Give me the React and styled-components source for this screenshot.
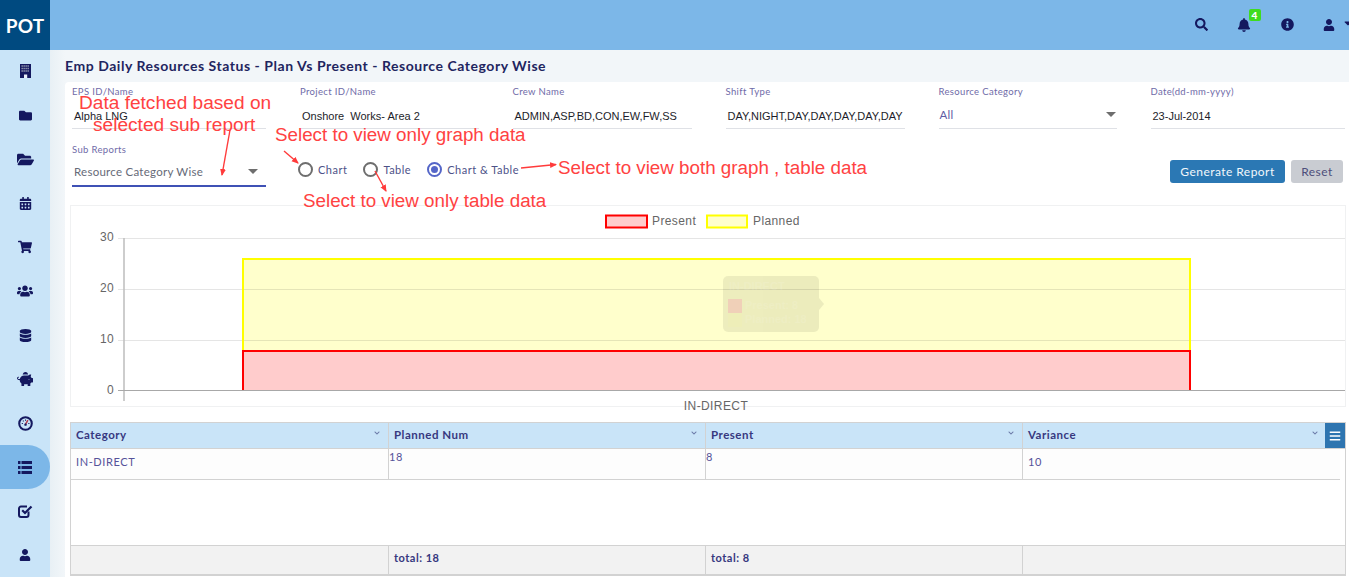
import React from "react";
import styled, { createGlobalStyle } from "styled-components";
import {
  FaFolder, FaFolderOpen, FaCalendarAlt, FaShoppingCart, FaUsers, FaDatabase,
  FaPiggyBank, FaUser, FaSearch, FaBell, FaInfoCircle, FaCaretDown, FaBars, FaChevronDown,
} from "react-icons/fa";

const Global = createGlobalStyle`
  html, body { margin: 0; padding: 0; background: #fff; }
  * { box-sizing: border-box; }
`;

const Page = styled.div`
  position: relative;
  width: 1349px;
  height: 577px;
  overflow: hidden;
  display: grid;
  grid-template-columns: 50px 1fr;
  grid-template-rows: 50px 1fr;
  font-family: "Lato", sans-serif;
  color: #3b3a8c;
`;
const Logo = styled.div`
  background: #004a80;
  color: #fff;
  font-size: 19px;
  font-weight: 700;
  display: flex;
  align-items: center;
  justify-content: center;
  letter-spacing: 0.2px;
`;
const TopBar = styled.header`
  background: #7cb7e8;
  display: flex;
  align-items: center;
  justify-content: flex-end;
  color: #14185f;
  overflow: hidden;
`;
const TopIcon = styled.span`
  position: relative;
  display: flex;
  align-items: center;
  width: 43px;
  flex: none;
  justify-content: center;
  font-size: ${(p) => p.$size || 13}px;
  margin-top: -1px;
`;
const UserMenu = styled(TopIcon)`
  width: 32px;
  justify-content: flex-start;
  gap: 7px;
  margin-left: 14.5px;
  margin-right: -6px;
`;
const Caret = styled(FaCaretDown)`
  font-size: 12px;
  flex: none;
  margin-top: -4px;
`;
const Badge = styled.span`
  position: absolute;
  top: -9px;
  left: 26px;
  min-width: 12px;
  height: 12px;
  border-radius: 2px;
  background: #3fdc1e;
  color: #fff;
  font-size: 10px;
  font-weight: 900;
  line-height: 12px;
  text-align: center;
`;
const Sidebar = styled.nav`
  background: #c9e4f8;
  display: flex;
  flex-direction: column;
`;
const NavItem = styled.div`
  height: 44px;
  flex: none;
  display: flex;
  align-items: center;
  justify-content: center;
  color: #14185f;
  font-size: 14px;
  position: relative;
  top: -1px;
  background: ${(p) => (p.$active ? "#7cb7e8" : "transparent")};
  border-radius: 0 22px 22px 0;
`;
const Main = styled.main`
  background: linear-gradient(90deg, #e8f0f5 0, #f2f6f9 15px);
  padding-left: 15px;
  display: flex;
  flex-direction: column;
  min-width: 0;
`;
const Title = styled.h1`
  margin: 0;
  height: 32px;
  font-size: 14px;
  line-height: 32px;
  font-weight: 700;
  color: #1f2560;
  letter-spacing: 0.54px;
  white-space: nowrap;
`;
const Panel = styled.section`
  flex: 1;
  background: #fff;
  border-radius: 4px 0 0 0;
  padding: 4px 3px 0 5px;
  display: flex;
  flex-direction: column;
`;
const FieldRow = styled.div`
  display: grid;
  grid-template-columns: 194px 178.5px 179px 179px 178px 194px;
  column-gap: 34px;
  padding-left: 2px;
  height: 43px;
`;
const Field = styled.div`
  display: flex;
  flex-direction: column;
  flex: 1;
  border-bottom: ${(p) => (p.$strong ? "2px solid #3f51b5" : "1px solid #dfe1e6")};
  min-width: 0;
`;
const Label = styled.label`
  font-size: 9.5px;
  line-height: 12px;
  color: #6f6ba8;
  letter-spacing: 0.35px;
  white-space: nowrap;
`;
const Value = styled.div`
  margin-top: 11px;
  padding-left: 2px;
  font-family: "Liberation Sans", sans-serif;
  font-size: 11px;
  line-height: 14px;
  color: #1d1d2a;
  white-space: pre;
`;
const SelectValue = styled.div`
  display: flex;
  align-items: center;
  justify-content: space-between;
  font-size: 11.5px;
  letter-spacing: ${(p) => (p.$wide ? "0.26px" : "0.3px")};
  color: ${(p) => (p.$wide ? "#666a78" : "#5f5ca3")};
  padding: 0 0 0 ${(p) => (p.$wide ? "2px" : "1px")};
  margin-top: ${(p) => (p.$wide ? "9px" : "10px")};
  line-height: 14px;
`;
const Arrow = styled.span`
  width: 0;
  height: 0;
  border-left: 5px solid transparent;
  border-right: 5px solid transparent;
  border-top: 5px solid #6e6e6e;
  margin-right: ${(p) => (p.$right || 1)}px;
  margin-top: -2px;
`;
const ControlRow = styled.div`
  display: flex;
  margin-top: 15px;
  height: 43px;
  padding: 0 3px 0 2px;
`;
const SubReports = styled.div`
  width: 194px;
  display: flex;
`;
const Radios = styled.div`
  display: flex;
  margin-left: 32px;
  gap: 16px;
  height: 15px;
  margin-top: 18px;
`;
const Radio = styled.div`
  display: flex;
  align-items: center;
  gap: 5px;
  font-size: 11px;
  letter-spacing: 0.5px;
  color: #4d5288;
  white-space: nowrap;
`;
const Dot = styled.span`
  width: 15px;
  height: 15px;
  flex: none;
  border-radius: 50%;
  border: 2px solid ${(p) => (p.$on ? "#5566c8" : "#6e6e6e")};
  display: flex;
  align-items: center;
  justify-content: center;
  &::after {
    content: "";
    width: 7px;
    height: 7px;
    border-radius: 50%;
    background: ${(p) => (p.$on ? "#5566c8" : "transparent")};
  }
`;
const Actions = styled.div`
  margin-left: auto;
  display: flex;
  gap: 6px;
  margin-top: 16px;
  height: 23px;
`;
const Button = styled.button`
  border: 0;
  border-radius: 3px;
  padding: 0;
  width: ${(p) => p.$w}px;
  font-family: "Lato", sans-serif;
  font-size: 12px;
  letter-spacing: 0.45px;
  background: ${(p) => (p.$primary ? "#2b78b4" : "#c9ccd2")};
  color: ${(p) => (p.$primary ? "#f2f7fb" : "#4d4f7a")};
`;
const ChartFrame = styled.div`
  margin-top: 18px;
  height: 202px;
  border: 1px solid #f0f1f2;
`;
const ChartSvg = styled.svg`
  display: block;
  width: 1274px;
  height: 200px;
  overflow: visible;
  font-family: "Liberation Sans", sans-serif;
`;
const Table = styled.div`
  position: relative;
  margin-top: 15px;
  height: 154px;
  border: 1px solid #d2d2d2;
  border-bottom-width: 2px;
  display: flex;
  flex-direction: column;
`;
const Cols = styled.div`
  display: grid;
  grid-template-columns: 318px 317px 317px 1fr;
`;
const Head = styled(Cols)`
  height: 26px;
  flex: none;
  background: #c9e4f8;
  border-bottom: 1px solid #d2d2d2;
`;
const HeadCell = styled.div`
  display: flex;
  align-items: center;
  justify-content: space-between;
  padding: 0 ${(p) => (p.$last ? "27px" : "8px")} 2px 5px;
  font-size: 11.5px;
  font-weight: 700;
  letter-spacing: 0.5px;
  color: #37387f;
  border-right: ${(p) => (p.$last ? "0" : "1px solid #d2d2d2")};
`;
const Chevron = styled(FaChevronDown)`
  font-size: 6px;
  color: #6b7aa8;
  margin-top: -4px;
`;
const MenuButton = styled.span`
  position: absolute;
  top: 0;
  right: 0;
  width: 20px;
  height: 25px;
  background: #2e75b0;
  color: #fff;
  display: flex;
  align-items: center;
  justify-content: center;
  font-size: 12px;
`;
const BodyRow = styled(Cols)`
  height: 31px;
  flex: none;
  margin-right: 5px;
  border-bottom: 1px solid #d2d2d2;
  background: #fdfdfd;
`;
const Cell = styled.div`
  padding: ${(p) => (p.$raw ? "1px 0 0 0" : "6px 0 0 5px")};
  font-size: 11px;
  line-height: 14px;
  letter-spacing: 0.6px;
  color: #55529a;
  border-right: ${(p) => (p.$last ? "0" : "1px solid #d2d2d2")};
`;
const Spacer = styled.div`
  flex: 1;
`;
const Foot = styled(Cols)`
  height: 29px;
  flex: none;
  background: #f2f2f2;
  border-top: 1px solid #d2d2d2;
`;
const FootCell = styled.div`
  padding: 5px 0 0 5px;
  font-size: 11px;
  line-height: 14px;
  font-weight: 700;
  letter-spacing: 0.5px;
  color: #37387f;
  border-right: ${(p) => (p.$last ? "0" : "1px solid #d2d2d2")};
`;
const Note = styled.div`
  position: absolute;
  left: ${(p) => p.$x}px;
  top: ${(p) => p.$y}px;
  font-family: "Liberation Sans", sans-serif;
  font-size: ${(p) => p.$size || 18.8}px;
  line-height: 22px;
  color: #ff4242;
  white-space: nowrap;
  z-index: 3;
`;
const ArrowLayer = styled.svg`
  position: absolute;
  left: 0;
  top: 0;
  width: 1349px;
  height: 577px;
  pointer-events: none;
  z-index: 4;
`;

const Building = () => (
  <svg width="11" height="14" viewBox="0 0 11 14">
    <rect width="11" height="14" fill="#14185f" />
    <path d="M1.5 2h8M1.5 4.5h8M1.5 7h8" stroke="#9fa5b8" strokeWidth="1.3" strokeDasharray="1.3 0.7" />
    <rect x="4" y="10.5" width="3.2" height="3.5" fill="#e8eef8" />
  </svg>
);
const Gauge = () => (
  <svg width="15" height="15" viewBox="0 0 16 16" fill="none" stroke="currentColor">
    <circle cx="8" cy="8" r="6.7" strokeWidth="2.2" />
    <path d="M8 9 10.5 4.5" strokeWidth="1.6" stroke="#b03a4a" />
    <path d="M4 8h1.2M11 8h1.2M5.2 5 6 5.8M8 3.6V5" strokeWidth="1.1" />
    <circle cx="8" cy="9.2" r="1.3" fill="currentColor" stroke="none" />
  </svg>
);
const ListIcon = () => (
  <svg width="14" height="13" viewBox="0 0 14 13" fill="currentColor">
    <path d="M0 0h2.5v3H0zM3.5 0H14v3H3.5zM0 5h2.5v3H0zM3.5 5H14v3H3.5zM0 10h2.5v3H0zM3.5 10H14v3H3.5z" />
  </svg>
);
const CheckBox = () => (
  <svg width="15" height="14" viewBox="0 0 15 14" fill="none" stroke="currentColor">
    <path d="M10.5 7.5V11a2 2 0 0 1-2 2H3a2 2 0 0 1-2-2V4.5a2 2 0 0 1 2-2h6" strokeWidth="2" />
    <path d="M4.2 6.2 7 9 13.5 2.4" strokeWidth="2.2" />
  </svg>
);

const navIcons = [
  <Building />, <FaFolder size={13} />, <FaFolderOpen size={17} />, <FaCalendarAlt size={13} />, <FaShoppingCart size={14} />,
  <FaUsers size={16} />, <FaDatabase size={13} />, <FaPiggyBank size={16} />, <Gauge />, <ListIcon />,
  <CheckBox />, <FaUser size={12} />,
];
const topFields = [
  ["EPS ID/Name", "Alpha LNG"],
  ["Project ID/Name", "Onshore  Works- Area 2"],
  ["Crew Name", "ADMIN,ASP,BD,CON,EW,FW,SS"],
  ["Shift Type", "DAY,NIGHT,DAY,DAY,DAY,DAY,DAY"],
  ["Resource Category", null],
  ["Date(dd-mm-yyyy)", "23-Jul-2014"],
];
const heads = ["Category", "Planned Num", "Present", "Variance"];
const arrows = [
  "M230 130 222 175",
  "M284 151 298 163",
  "M375 171 386 191",
  "M521 168 556 164.5",
];

export default function App() {
  return (
    <Page>
      <Global />
      <Logo>POT</Logo>
      <TopBar>
        <TopIcon><FaSearch /></TopIcon>
        <TopIcon $size={14}><FaBell /><Badge>4</Badge></TopIcon>
        <TopIcon><FaInfoCircle /></TopIcon>
        <UserMenu><FaUser size={12} /><Caret /></UserMenu>
      </TopBar>
      <Sidebar>
        {navIcons.map((icon, i) => (
          <NavItem key={i} $active={i === 9}>{icon}</NavItem>
        ))}
      </Sidebar>
      <Main>
        <Title>Emp Daily Resources Status - Plan Vs Present - Resource Category Wise</Title>
        <Panel>
          <FieldRow>
            {topFields.map(([label, value]) => (
              <Field key={label}>
                <Label>{label}</Label>
                {value ? <Value>{value}</Value> : (
                  <SelectValue>All<Arrow /></SelectValue>
                )}
              </Field>
            ))}
          </FieldRow>
          <ControlRow>
            <SubReports>
              <Field $strong>
                <Label>Sub Reports</Label>
                <SelectValue $wide>Resource Category Wise<Arrow $right={8} /></SelectValue>
              </Field>
            </SubReports>
            <Radios>
              <Radio><Dot />Chart</Radio>
              <Radio><Dot />Table</Radio>
              <Radio><Dot $on />Chart &amp; Table</Radio>
            </Radios>
            <Actions>
              <Button $primary $w={115}>Generate Report</Button>
              <Button $w={52}>Reset</Button>
            </Actions>
          </ControlRow>
          <ChartFrame>
            <ChartSvg viewBox="71 206 1274 200">
              <rect x="606" y="215.5" width="41" height="12" fill="#ffcccc" stroke="#ff0000" strokeWidth="2" />
              <text x="652" y="225" fontSize="12" fill="#666" letterSpacing="0.4">Present</text>
              <rect x="707" y="215.5" width="40" height="12" fill="#ffffcc" stroke="#ffff00" strokeWidth="2" />
              <text x="753" y="225" fontSize="12" fill="#666" letterSpacing="0.4">Planned</text>
              <rect x="243" y="259" width="947" height="132" fill="#ffffcc" />
              <rect x="243" y="351" width="947" height="39" fill="#ffcccc" />
              <path d="M118 238.5H1345M118 289.5H1345M118 340.5H1345" stroke="#000" strokeOpacity="0.1" />
              <path d="M124 238V401" stroke="#bdbdbd" strokeWidth="1.5" />
              <path d="M118 390.5H1345" stroke="#a8a8a8" strokeWidth="1.2" />
              <path d="M243 390V259H1190V390" fill="none" stroke="#ffff00" strokeWidth="2" />
              <path d="M243 390V351H1190V390" fill="none" stroke="#ff0000" strokeWidth="2" />
              <g fontSize="12" fill="#666" textAnchor="end" letterSpacing="0.3">
                <text x="114" y="241">30</text>
                <text x="114" y="292">20</text>
                <text x="114" y="343">10</text>
                <text x="114" y="394">0</text>
              </g>
              <text x="716" y="410" fontSize="12" fill="#666" textAnchor="middle" letterSpacing="0.4">IN-DIRECT</text>
              <g opacity="0.07">
                <rect x="723" y="276" width="96" height="56" rx="5" fill="#000" />
                <path d="M819 298 824 304 819 310Z" fill="#000" />
              </g>
              <rect x="728" y="299" width="14" height="14" fill="#f0d0b8" />
              <rect x="728" y="313" width="14" height="14" fill="#eeeeb8" />
              <g fontSize="11" fontWeight="700" fill="#fff" opacity="0.1">
                <text x="729" y="290">IN-DIRECT</text>
                <text x="745" y="309">Present: 8</text>
                <text x="745" y="323">Planned: 18</text>
              </g>
            </ChartSvg>
          </ChartFrame>
          <Table>
            <Head>
              {heads.map((h, i) => (
                <HeadCell key={h} $last={i === 3}>{h}<Chevron /></HeadCell>
              ))}
            </Head>
            <MenuButton><FaBars /></MenuButton>
            <BodyRow>
              <Cell>IN-DIRECT</Cell>
              <Cell $raw>18</Cell>
              <Cell $raw>8</Cell>
              <Cell $last>10</Cell>
            </BodyRow>
            <Spacer />
            <Foot>
              <FootCell />
              <FootCell>total: 18</FootCell>
              <FootCell>total: 8</FootCell>
              <FootCell $last />
            </Foot>
          </Table>
        </Panel>
      </Main>
      <Note $x={79} $y={92} $size={19.1}>Data fetched based on</Note>
      <Note $x={93} $y={114} $size={19.1}>selected sub report</Note>
      <Note $x={275} $y={124}>Select to view only graph data</Note>
      <Note $x={558} $y={157}>Select to view both graph , table data</Note>
      <Note $x={303} $y={190}>Select to view only table data</Note>
      <ArrowLayer viewBox="0 0 1349 577">
        <defs>
          <marker id="head" markerWidth="7" markerHeight="7" refX="6" refY="3" orient="auto" markerUnits="userSpaceOnUse">
            <path d="M0 0 7 3 0 6Z" fill="#ff3b3b" />
          </marker>
        </defs>
        {arrows.map((d) => (
          <path key={d} d={d} stroke="#ff3b3b" strokeWidth="1.4" fill="none" markerEnd="url(#head)" />
        ))}
      </ArrowLayer>
    </Page>
  );
}
